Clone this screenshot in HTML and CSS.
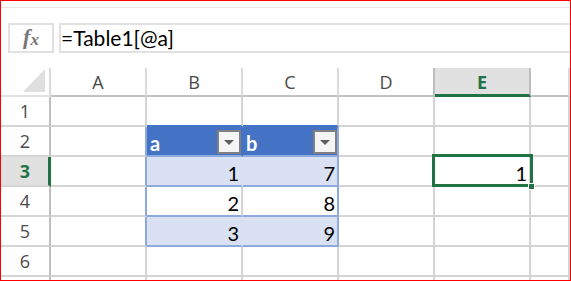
FILE: index.html
```
<!DOCTYPE html>
<html lang="en">

<head>
    <meta charset="UTF-8">
    <title>Table1 - Sheet1</title>
    <link rel="stylesheet" href="styles.css">
</head>

<body>
    <div class="frame">
        <div class="topline"></div>

        <!-- formula bar -->
        <div class="formula-bar">
            <div class="fx"><i>f</i><i class="sub">x</i></div>
            <div class="formula">=Table1[@a]</div>
        </div>

        <!-- sheet -->
        <div class="sheet">
            <div class="corner"><span class="tri"></span></div>
            <div class="colhead">A</div>
            <div class="colhead">B</div>
            <div class="colhead">C</div>
            <div class="colhead edge-r">D</div>
            <div class="colhead active">E</div>
            <div class="colhead"></div>

            <div class="rowhead">1</div>
            <div class="cell"></div>
            <div class="cell tbl-top"></div>
            <div class="cell tbl-top"></div>
            <div class="cell"></div>
            <div class="cell"></div>
            <div class="cell"></div>

            <div class="rowhead">2</div>
            <div class="cell tbl-left"></div>
            <div class="cell th th-b">a<span class="drop"></span></div>
            <div class="cell th th-c">b<span class="drop"></span></div>
            <div class="cell"></div>
            <div class="cell"></div>
            <div class="cell"></div>

            <div class="rowhead active">3</div>
            <div class="cell tbl-left"></div>
            <div class="cell num band band-b">1</div>
            <div class="cell num band band-c">7</div>
            <div class="cell"></div>
            <div class="cell num">1</div>
            <div class="cell"></div>

            <div class="rowhead">4</div>
            <div class="cell tbl-left"></div>
            <div class="cell num plain">2</div>
            <div class="cell num plain plain-c">8</div>
            <div class="cell"></div>
            <div class="cell"></div>
            <div class="cell"></div>

            <div class="rowhead">5</div>
            <div class="cell tbl-left"></div>
            <div class="cell num band band-b">3</div>
            <div class="cell num band band-c">9</div>
            <div class="cell"></div>
            <div class="cell"></div>
            <div class="cell"></div>

            <div class="rowhead">6</div>
            <div class="cell"></div>
            <div class="cell"></div>
            <div class="cell"></div>
            <div class="cell"></div>
            <div class="cell"></div>
            <div class="cell"></div>

            <div class="rowhead"></div>
            <div class="cell"></div>
            <div class="cell"></div>
            <div class="cell"></div>
            <div class="cell"></div>
            <div class="cell"></div>
            <div class="cell"></div>

            <!-- active cell E3 -->
            <div class="selection"></div>
            <div class="handle"></div>
        </div>
    </div>
</body>

</html>
```

FILE: styles.css
```
body {
    margin: 0;
    background-color: #fff;
    font-family: Lato, "Open Sans", sans-serif;
    color: #000;
}

.frame {
    width: 571px;
    height: 281px;
    box-sizing: border-box;
    border: 1px solid #ff0000;
    overflow: hidden;
    position: relative;
}

.topline {
    height: 6px;
    border-bottom: 1px solid #e6e6e6;
}

/* formula bar */
.formula-bar {
    display: flex;
    gap: 5px;
    height: 30px;
    margin-top: 15px;
    padding-left: 7px;
}

.fx {
    width: 46px;
    box-sizing: border-box;
    border: 2px solid #e1e1e1;
    display: flex;
    align-items: center;
    justify-content: center;
    font-family: "Liberation Serif", serif;
    font-weight: bold;
    font-size: 22px;
    color: #777;
    padding-bottom: 2px;
}

.fx .sub {
    font-size: 17px;
    margin-left: 0;
    margin-top: 5px;
}

.formula {
    flex: 1;
    box-sizing: border-box;
    border: 2px solid #e1e1e1;
    border-right: none;
    font-size: 21px;
    line-height: 26px;
    padding-left: 0;
}

/* grid */
.sheet {
    position: relative;
    margin-top: 15px;
    display: grid;
    grid-template-columns: 50px 96px 96px 96px 96px 96px 1fr;
    grid-template-rows: 29px repeat(7, 30px);
}

.sheet > div {
    box-sizing: border-box;
}

.corner {
    border-right: 2px solid #dadada;
    border-bottom: 2px solid #e1e1e1;
    position: relative;
}

.corner .tri {
    position: absolute;
    right: 4px;
    bottom: 3px;
    width: 0;
    height: 0;
    border-left: 22px solid transparent;
    border-bottom: 23px solid #dfdfdf;
}

.colhead,
.rowhead {
    display: flex;
    align-items: center;
    justify-content: center;
    font-family: "Open Sans", sans-serif;
    font-size: 18px;
    color: #4a4a4a;
}

.colhead {
    border-right: 2px solid #dadada;
    border-bottom: 2px solid #c3c3c3;
    padding-top: 1px;
}

.colhead.edge-r {
    border-right-color: #bdbdbd;
}

.colhead.active {
    background-color: #e1e1e1;
    border-right-color: #bdbdbd;
    border-bottom: 3px solid #217346;
    color: #217346;
    font-weight: bold;
}

.rowhead {
    border-right: 2px solid #bfbfbf;
    border-bottom: 2px solid #d4d4d4;
}

.rowhead.active {
    background-color: #e1e1e1;
    border-right: 3px solid #217346;
    color: #217346;
    font-weight: bold;
    padding-left: 1px;
}

.cell {
    border-right: 2px solid #d4d4d4;
    border-bottom: 2px solid #d4d4d4;
    font-size: 20px;
    line-height: 24px;
    display: flex;
    align-items: flex-end;
    padding: 0 2px 0 3px;
}

.num {
    justify-content: flex-end;
}

/* Table1 */
.tbl-top {
    border-bottom-color: #4472c4;
}

.tbl-left {
    border-right-color: #8ea9db;
}

.th {
    background-color: #4472c4;
    color: #fff;
    font-weight: bold;
    border-bottom-color: #8ea9db;
    padding-right: 0;
}

.th-b {
    border-right-color: #4472c4;
}

.th-c {
    border-right-color: #8ea9db;
}

.drop {
    margin-left: auto;
    margin-bottom: 1px;
    width: 24px;
    height: 24px;
    box-sizing: border-box;
    border: 2px solid #7f7f7f;
    background-color: #f4f4f4;
    display: flex;
    align-items: center;
    justify-content: center;
}

.drop::after {
    content: "";
    width: 0;
    height: 0;
    border-left: 5px solid transparent;
    border-right: 5px solid transparent;
    border-top: 5px solid #5f5f5f;
}

.band {
    background-color: #d9e1f2;
    border-bottom-color: #8ea9db;
}

.band-b {
    border-right-color: #d9e1f2;
}

.band-c,
.plain-c {
    border-right-color: #8ea9db;
}

.plain {
    border-bottom-color: #8ea9db;
}

/* active cell */
.selection {
    position: absolute;
    left: 431px;
    top: 86px;
    width: 101px;
    height: 33px;
    border: 3px solid #217346;
}

.handle {
    position: absolute;
    left: 527px;
    top: 115px;
    width: 7px;
    height: 7px;
    background-color: #217346;
    border: 1px solid #fff;
}
```
